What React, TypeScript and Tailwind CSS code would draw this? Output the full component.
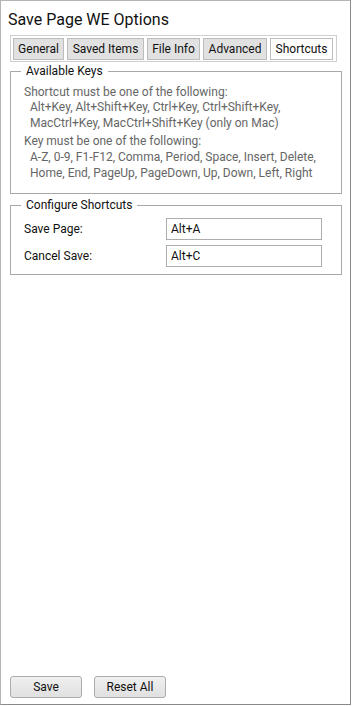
import React from "react";

function Tab({ label, w, active }: { label: string; w: string; active?: boolean }) {
  return (
    <div
      className={
        "h-[22px] flex items-center justify-center border border-[#bdbdbd] text-[12px] leading-none " +
        w +
        (active ? " bg-white" : " bg-[#e1e1e1]")
      }
    >
      {label}
    </div>
  );
}

function Row({ label, value }: { label: string; value: string }) {
  return (
    <div className="flex items-center">
      <span className="w-[142px]">{label}</span>
      <div className="w-[156px] h-[22px] border border-[#acacac] flex items-center pl-[4px]">{value}</div>
    </div>
  );
}

export default function App() {
  return (
    <div className="bg-white w-[352px] h-[706px] font-['Roboto',sans-serif]">
      <div className="w-[351px] h-[705px] border border-[#b4b4b4] border-r-[#8a8a8a] border-b-[#8a8a8a] flex flex-col text-[#111]">
        <div className="pl-[7px] pt-[8px] text-[16px] leading-[22px]">Save Page WE Options</div>
        <div className="mt-[4px] ml-[9px] w-[327px] h-[27px] border border-[#cfcfcf] flex items-center gap-[3px] pl-[2px]">
          <Tab label="General" w="w-[51px]" />
          <Tab label="Saved Items" w="w-[77px]" />
          <Tab label="File Info" w="w-[53px]" />
          <Tab label="Advanced" w="w-[64px]" />
          <Tab label="Shortcuts" w="w-[63px]" active />
        </div>

        <fieldset className="mt-[2px] ml-[9px] w-[332px] border border-[#a8a8a8] pl-[13px] pr-[8px] pt-[5px] pb-[12px] text-[12px] leading-[15.6px]">
          <legend className="-ml-[3px] px-[5px]">Available Keys</legend>
          <div className="text-[#666]">
            <div>Shortcut must be one of the following:</div>
            <div className="pl-[6px]">Alt+Key, Alt+Shift+Key, Ctrl+Key, Ctrl+Shift+Key,</div>
            <div className="pl-[6px]">MacCtrl+Key, MacCtrl+Shift+Key (only on Mac)</div>
            <div className="mt-[3px]">Key must be one of the following:</div>
            <div className="pl-[6px]">A-Z, 0-9, F1-F12, Comma, Period, Space, Insert, Delete,</div>
            <div className="pl-[6px]">Home, End, PageUp, PageDown, Up, Down, Left, Right</div>
          </div>
        </fieldset>

        <fieldset className="mt-[4px] ml-[9px] w-[332px] border border-[#a8a8a8] pl-[13px] pr-[8px] pt-[4px] pb-[7px] text-[12px]">
          <legend className="-ml-[3px] px-[5px] leading-[15.5px]">Configure Shortcuts</legend>
          <div className="flex flex-col gap-[5px]">
            <Row label="Save Page:" value="Alt+A" />
            <Row label="Cancel Save:" value="Alt+C" />
          </div>
        </fieldset>

        <div className="flex-1" />
        <div className="flex gap-[12px] pl-[9px] pb-[6px]">
          <button className="w-[72px] h-[22px] rounded-[3px] border border-[#acacac] bg-[linear-gradient(#f0f0f0,#e0e0e0)] text-[12px] leading-none">Save</button>
          <button className="w-[72px] h-[22px] rounded-[3px] border border-[#acacac] bg-[linear-gradient(#f0f0f0,#e0e0e0)] text-[12px] leading-none">Reset All</button>
        </div>
      </div>
    </div>
  );
}
